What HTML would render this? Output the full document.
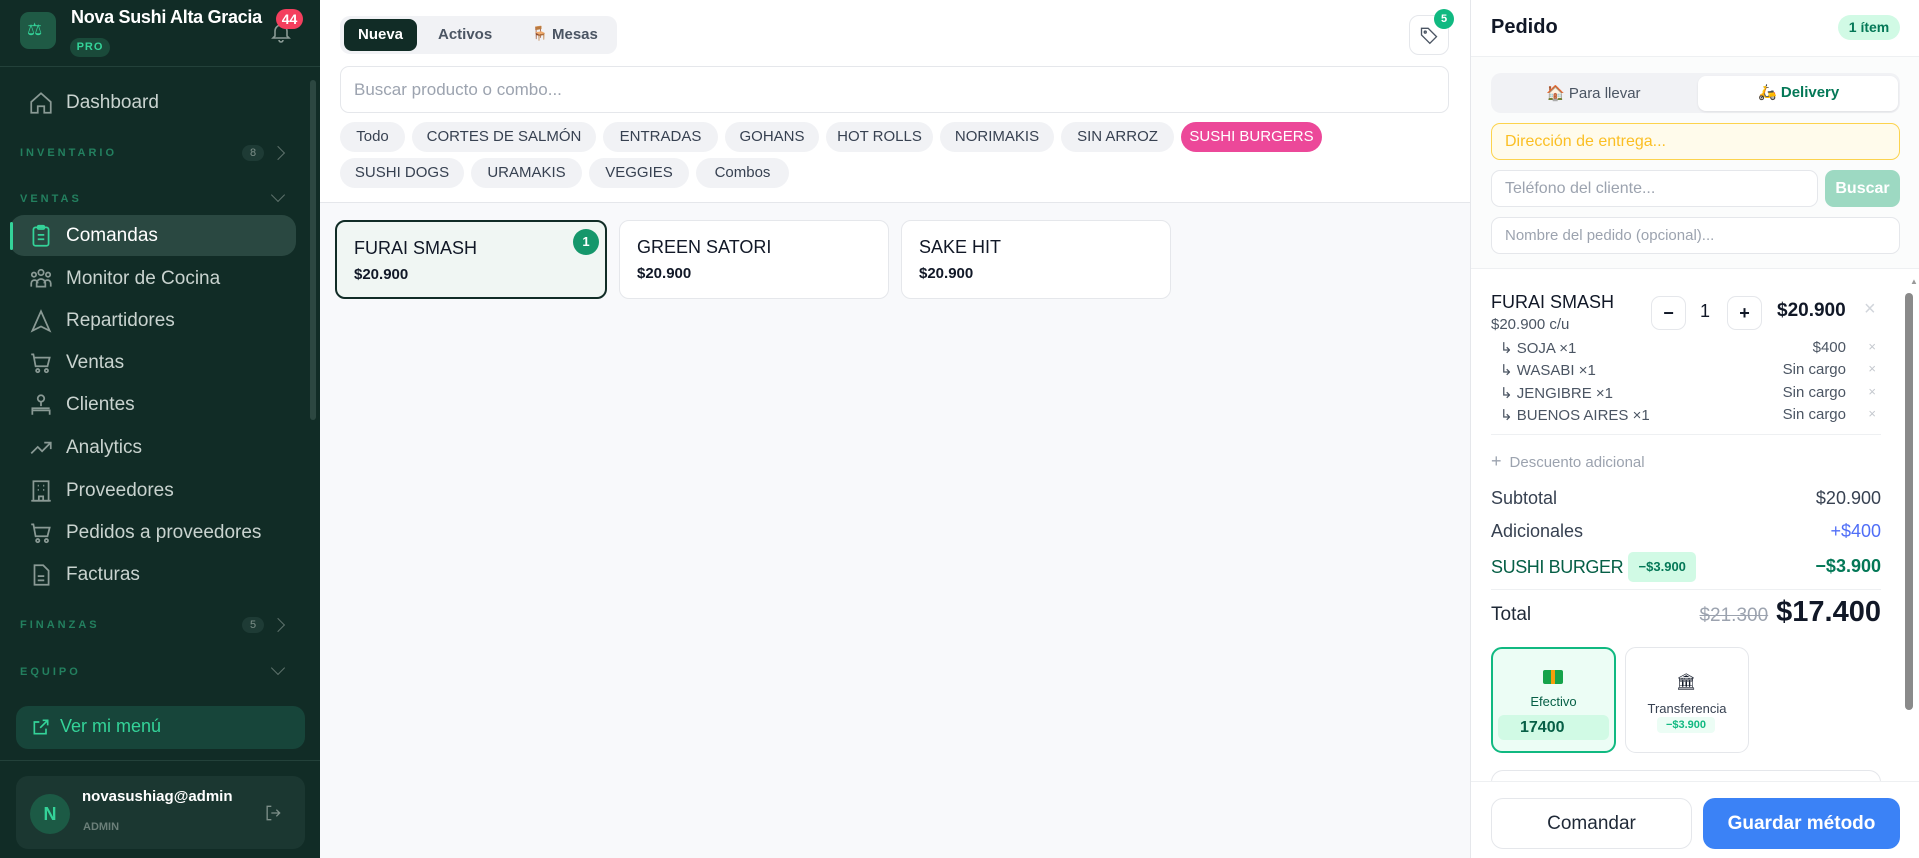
<!DOCTYPE html>
<html><head><meta charset="utf-8"><style>
*{box-sizing:border-box;margin:0;padding:0}
body{width:1919px;height:858px;overflow:hidden;font-family:"Liberation Sans",sans-serif;background:#fff;position:relative;color:#111827}
.a{position:absolute}
#sb{left:0;top:0;width:320px;height:858px;background:#112c26}
.nav{position:absolute;left:28px;font-size:19px;color:#c9d3cf;display:flex;align-items:center;gap:0}
.nav svg{width:26px;height:26px;margin-right:12px;stroke:#8a9a95;fill:none;stroke-width:1.6}
.sec{position:absolute;left:20px;font-size:11px;letter-spacing:3px;font-weight:bold;color:#23805f}
.cnt{position:absolute;left:242px;width:22px;height:16px;border-radius:8px;background:#1e3b35;color:#7d8f89;font-size:11px;text-align:center;line-height:16px}
.chev{position:absolute;left:273px;width:10px;height:10px;border-right:1.6px solid #5d716b;border-bottom:1.6px solid #5d716b}
.chip{position:absolute;height:30px;border-radius:15px;background:#f1f2f5;color:#374151;font-size:15px;line-height:30px;text-align:center}
.card{position:absolute;top:220px;height:79px;background:#fff;border:1px solid #e5e7eb;border-radius:10px}
.card b{position:absolute;left:17px;top:16px;font-size:18px;font-weight:normal;color:#111827}
.card i{position:absolute;left:17px;top:44px;font-size:15px;font-weight:bold;font-style:normal;color:#111827}
.inp{position:absolute;border:1px solid #e5e7eb;border-radius:9px;background:#fff;font-size:16px;color:#9ca3af;padding-left:13px}
.mod{position:absolute;left:1500px;width:380px;font-size:15px;color:#4b5563}
.mod span{position:absolute;right:34px;top:0}
.mod em{position:absolute;right:4px;top:0;font-style:normal;color:#c4c8ce;font-size:13px}
.row{position:absolute;left:1491px;width:390px;font-size:18px;color:#374151}
.row span.r{position:absolute;right:0;top:0}
</style></head><body>
<div id="sb" class="a">
 <div class="a" style="left:20px;top:12px;width:36px;height:37px;border-radius:9px;background:#1f5a45"></div>
 <div class="a" style="left:27px;top:20px;color:#34d399;font-size:17px">⚖</div>
 <div class="a" style="left:71px;top:7px;color:#fff;font-size:18px;font-weight:bold;letter-spacing:-0.3px">Nova Sushi Alta Gracia</div>
 <div class="a" style="left:70px;top:38px;width:40px;height:19px;border-radius:10px;background:#1a4a3a;color:#34d399;font-size:11px;font-weight:bold;text-align:center;line-height:19px;letter-spacing:1px">PRO</div>
 <svg class="a" style="left:268px;top:20px" width="26" height="24" viewBox="0 0 24 24" fill="none" stroke="#8a9a95" stroke-width="1.6"><path d="M6 16V11a6 6 0 0112 0v5l2 2H4z"/><path d="M10 20a2 2 0 004 0"/></svg>
 <div class="a" style="left:276px;top:9px;width:27px;height:20px;border-radius:10px;background:#f43f5e;color:#fff;font-size:14px;font-weight:bold;text-align:center;line-height:20px">44</div>
 <div class="a" style="left:0;top:66px;width:320px;height:1px;background:#23413a"></div>
 <div class="a" style="left:310px;top:80px;width:6px;height:340px;border-radius:3px;background:#2c4741"></div>
 <div class="nav" style="top:90px"><svg viewBox="0 0 24 24"><path d="M3 11l9-8 9 8v10h-6v-6h-6v6H3z"/></svg>Dashboard</div>
 <div class="sec" style="top:147px">INVENTARIO</div><div class="cnt" style="top:145px">8</div><div class="chev" style="top:148px;transform:rotate(-45deg)"></div>
 <div class="sec" style="top:193px">VENTAS</div><div class="chev" style="top:190px;transform:rotate(45deg)"></div>
 <div class="a" style="left:10px;top:215px;width:286px;height:41px;border-radius:14px;background:#2a4841"></div>
 <div class="a" style="left:10px;top:222px;width:3px;height:28px;background:#34d399;border-radius:2px"></div>
 <div class="nav" style="top:223px;color:#fff"><svg viewBox="0 0 24 24" style="stroke:#34d399"><rect x="5" y="4" width="14" height="17" rx="2"/><rect x="9" y="2.5" width="6" height="3" rx="1"/><path d="M9 11h6M9 15h6"/></svg>Comandas</div>
 <div class="nav" style="top:266px"><svg viewBox="0 0 24 24"><circle cx="12" cy="6" r="2.5"/><circle cx="5.5" cy="8" r="2"/><circle cx="18.5" cy="8" r="2"/><path d="M3 19v-3a3 3 0 016 0M15 16a3 3 0 016 0v3M8 19v-3a4 4 0 018 0v3z"/></svg>Monitor de Cocina</div>
 <div class="nav" style="top:308px"><svg viewBox="0 0 24 24"><path d="M12 3L4 21l8-4 8 4z"/></svg>Repartidores</div>
 <div class="nav" style="top:350px"><svg viewBox="0 0 24 24"><path d="M3 4h2l2 11h11l2-8H6"/><circle cx="9" cy="19" r="1.5"/><circle cx="17" cy="19" r="1.5"/></svg>Ventas</div>
 <div class="nav" style="top:392px"><svg viewBox="0 0 24 24"><circle cx="12" cy="6" r="3"/><path d="M12 9v4M4 21v-4h16v4M4 17v-2h16"/></svg>Clientes</div>
 <div class="nav" style="top:435px"><svg viewBox="0 0 24 24"><path d="M3 17l6-6 4 4 8-8M15 7h6v6"/></svg>Analytics</div>
 <div class="nav" style="top:478px"><svg viewBox="0 0 24 24"><rect x="5" y="3" width="14" height="18"/><path d="M9 7h1M14 7h1M9 11h1M14 11h1M10 21v-4h4v4M3 21h18"/></svg>Proveedores</div>
 <div class="nav" style="top:520px"><svg viewBox="0 0 24 24"><path d="M3 4h2l2 11h11l2-8H6"/><circle cx="9" cy="19" r="1.5"/><circle cx="17" cy="19" r="1.5"/></svg>Pedidos a proveedores</div>
 <div class="nav" style="top:562px"><svg viewBox="0 0 24 24"><path d="M6 3h8l5 5v13H6z"/><path d="M9 13h6M9 17h6"/></svg>Facturas</div>
 <div class="sec" style="top:619px">FINANZAS</div><div class="cnt" style="top:617px">5</div><div class="chev" style="top:620px;transform:rotate(-45deg)"></div>
 <div class="sec" style="top:666px">EQUIPO</div><div class="chev" style="top:663px;transform:rotate(45deg)"></div>
 <div class="a" style="left:16px;top:706px;width:289px;height:43px;border-radius:12px;background:#17453a"></div>
 <svg class="a" style="left:31px;top:717px" width="20" height="20" viewBox="0 0 24 24" fill="none" stroke="#34d399" stroke-width="2"><path d="M14 4h6v6M20 4l-9 9M18 14v6H4V6h6"/></svg>
 <div class="a" style="left:60px;top:716px;color:#34d399;font-size:18px">Ver mi menú</div>
 <div class="a" style="left:0;top:760px;width:320px;height:1px;background:#23413a"></div>
 <div class="a" style="left:16px;top:776px;width:289px;height:73px;border-radius:12px;background:#1b3731"></div>
 <div class="a" style="left:30px;top:794px;width:40px;height:40px;border-radius:20px;background:#1c5a45;color:#34d399;font-weight:bold;font-size:18px;text-align:center;line-height:40px">N</div>
 <div class="a" style="left:82px;top:788px;color:#fff;font-size:15px;font-weight:bold">novasushiag@admin</div>
 <div class="a" style="left:83px;top:821px;color:#6b7f79;font-size:11px;font-weight:bold">ADMIN</div>
 <svg class="a" style="left:263px;top:803px" width="20" height="20" viewBox="0 0 24 24" fill="none" stroke="#7d8f89" stroke-width="1.6"><path d="M10 4H5v16h5M10 12h10M16 8l4 4-4 4"/></svg>
</div>

<!-- main -->
<div class="a" style="left:320px;top:0;width:1150px;height:858px;background:#f8f9fb"></div>
<div class="a" style="left:320px;top:0;width:1150px;height:203px;background:#fff;border-bottom:1px solid #e5e7eb"></div>
<div class="a" style="left:340px;top:16px;width:277px;height:38px;border-radius:10px;background:#f1f2f5"></div>
<div class="a" style="left:344px;top:19px;width:73px;height:32px;border-radius:8px;background:#112c26;color:#fff;font-size:15px;font-weight:bold;text-align:center;line-height:32px">Nueva</div>
<div class="a" style="left:438px;top:26px;color:#4b5563;font-size:15px;font-weight:bold">Activos</div>
<div class="a" style="left:531px;top:25px;color:#c0394b;font-size:14px">🪑</div>
<div class="a" style="left:552px;top:26px;color:#4b5563;font-size:15px;font-weight:bold">Mesas</div>
<div class="a" style="left:1409px;top:15px;width:40px;height:40px;border-radius:10px;border:1px solid #e5e7eb;background:#fff"></div>
<svg class="a" style="left:1419px;top:25px" width="20" height="20" viewBox="0 0 24 24" fill="none" stroke="#4b5563" stroke-width="1.6"><path d="M3 12V4h8l10 10-8 8z"/><circle cx="7.5" cy="8.5" r="1.2"/></svg>
<div class="a" style="left:1434px;top:9px;width:20px;height:20px;border-radius:10px;background:#10b981;color:#fff;font-size:11px;font-weight:bold;text-align:center;line-height:20px">5</div>
<div class="inp" style="left:340px;top:66px;width:1109px;height:47px;line-height:45px;font-size:17px">Buscar producto o combo...</div>
<div class="chip" style="left:340px;top:122px;width:65px">Todo</div>
<div class="chip" style="left:412px;top:122px;width:184px">CORTES DE SALMÓN</div>
<div class="chip" style="left:603px;top:122px;width:115px">ENTRADAS</div>
<div class="chip" style="left:725px;top:122px;width:94px">GOHANS</div>
<div class="chip" style="left:826px;top:122px;width:107px">HOT ROLLS</div>
<div class="chip" style="left:940px;top:122px;width:114px">NORIMAKIS</div>
<div class="chip" style="left:1061px;top:122px;width:113px">SIN ARROZ</div>
<div class="chip" style="left:1181px;top:122px;width:141px;background:#ec4899;color:#fff">SUSHI BURGERS</div>
<div class="chip" style="left:340px;top:158px;width:124px">SUSHI DOGS</div>
<div class="chip" style="left:471px;top:158px;width:111px">URAMAKIS</div>
<div class="chip" style="left:589px;top:158px;width:100px">VEGGIES</div>
<div class="chip" style="left:696px;top:158px;width:93px">Combos</div>
<div class="card" style="left:335px;width:272px;border:2px solid #112c26;background:#f0f6f3"><b>FURAI SMASH</b><i>$20.900</i></div>
<div class="a" style="left:573px;top:229px;width:26px;height:26px;border-radius:13px;background:#15976b;color:#fff;font-size:13px;font-weight:bold;text-align:center;line-height:26px">1</div>
<div class="card" style="left:619px;width:270px"><b>GREEN SATORI</b><i>$20.900</i></div>
<div class="card" style="left:901px;width:270px"><b>SAKE HIT</b><i>$20.900</i></div>

<!-- right panel -->
<div class="a" style="left:1470px;top:0;width:449px;height:858px;background:#fff;border-left:1px solid #e5e7eb"></div>
<div class="a" style="left:1491px;top:16px;font-size:20px;font-weight:bold;color:#111827">Pedido</div>
<div class="a" style="left:1838px;top:15px;width:62px;height:25px;border-radius:13px;background:#d1fae5;color:#047857;font-size:14px;font-weight:bold;text-align:center;line-height:25px">1 ítem</div>
<div class="a" style="left:1471px;top:56px;width:448px;height:213px;background:#fbfcfc;border-top:1px solid #eef0f2;border-bottom:1px solid #eef0f2"></div>
<div class="a" style="left:1491px;top:73px;width:409px;height:40px;border-radius:10px;background:#f1f2f5"></div>
<div class="a" style="left:1698px;top:76px;width:200px;height:35px;border-radius:8px;background:#fff;box-shadow:0 1px 2px rgba(0,0,0,.08)"></div>
<div class="a" style="left:1546px;top:84px;font-size:15px;color:#4b5563">🏠 Para llevar</div>
<div class="a" style="left:1758px;top:83px;font-size:15px;color:#047857;font-weight:bold"><span style="color:#e11d48">🛵</span> Delivery</div>
<div class="inp" style="left:1491px;top:123px;width:409px;height:37px;line-height:35px;background:#fffbeb;border-color:#fcd34d;color:#fbbf24;font-size:16px">Dirección de entrega...</div>
<div class="inp" style="left:1491px;top:170px;width:327px;height:37px;line-height:35px">Teléfono del cliente...</div>
<div class="a" style="left:1825px;top:170px;width:75px;height:37px;border-radius:9px;background:#9dd9c2;color:#fff;font-size:16px;font-weight:bold;text-align:center;line-height:37px">Buscar</div>
<div class="inp" style="left:1491px;top:217px;width:409px;height:37px;line-height:35px;font-size:15px">Nombre del pedido (opcional)...</div>
<div class="a" style="left:1491px;top:292px;font-size:18px;color:#111827">FURAI SMASH</div>
<div class="a" style="left:1491px;top:316px;font-size:15px;color:#4b5563">$20.900 c/u</div>
<div class="a" style="left:1651px;top:296px;width:35px;height:34px;border:1px solid #e5e7eb;border-radius:9px;text-align:center;line-height:32px;font-size:18px;font-weight:bold">−</div>
<div class="a" style="left:1700px;top:301px;font-size:18px">1</div>
<div class="a" style="left:1727px;top:296px;width:35px;height:34px;border:1px solid #e5e7eb;border-radius:9px;text-align:center;line-height:32px;font-size:18px;font-weight:bold">+</div>
<div class="a" style="left:1777px;top:300px;font-size:19px;font-weight:bold">$20.900</div>
<div class="a" style="left:1864px;top:298px;font-size:20px;color:#d1d5db">×</div>
<div class="mod" style="top:339px">↳ SOJA ×1<span>$400</span><em>×</em></div>
<div class="mod" style="top:361px">↳ WASABI ×1<span>Sin cargo</span><em>×</em></div>
<div class="mod" style="top:384px">↳ JENGIBRE ×1<span>Sin cargo</span><em>×</em></div>
<div class="mod" style="top:406px">↳ BUENOS AIRES ×1<span>Sin cargo</span><em>×</em></div>
<div class="a" style="left:1491px;top:434px;width:390px;height:1px;background:#eef0f2"></div>
<div class="a" style="left:1491px;top:451px;font-size:15px;color:#9ca3af"><span style="font-size:18px;margin-right:8px">+</span>Descuento adicional</div>
<div class="row" style="top:488px">Subtotal<span class="r">$20.900</span></div>
<div class="row" style="top:521px">Adicionales<span class="r" style="color:#4f6ef7">+$400</span></div>
<div class="row" style="top:552px;color:#065f46;display:flex;align-items:center"><span style="letter-spacing:-0.4px">SUSHI BURGER</span><span style="display:inline-block;margin-left:5px;width:68px;height:30px;border-radius:5px;background:#d1fae5;color:#047857;font-size:13px;font-weight:bold;text-align:center;line-height:30px">−$3.900</span><span class="r" style="font-weight:bold;color:#047857;top:4px">−$3.900</span></div>
<div class="a" style="left:1491px;top:589px;width:390px;height:1px;background:#eef0f2"></div>
<div class="row" style="top:604px;font-size:19px;color:#1f2937">Total</div>
<div class="a" style="right:38px;top:596px;white-space:nowrap"><span style="font-size:19px;color:#9ca3af;text-decoration:line-through;margin-right:8px">$21.300</span><span style="font-size:29px;font-weight:bold;color:#111827">$17.400</span></div>
<div class="a" style="left:1491px;top:647px;width:125px;height:106px;border:2px solid #10b981;border-radius:11px;background:#ecfdf5"></div>
<div class="a" style="left:1543px;top:670px;width:20px;height:14px;background:#16a34a;border-radius:2px"><div style="margin:0 auto;width:4px;height:14px;background:#f59e0b"></div></div>
<div class="a" style="left:1491px;top:694px;width:125px;text-align:center;font-size:13px;color:#065f46">Efectivo</div>
<div class="a" style="left:1498px;top:715px;width:111px;height:25px;border-radius:6px;background:#d1fae5;color:#065f46;font-size:16px;font-weight:bold;line-height:25px;padding-left:22px">17400</div>
<div class="a" style="left:1625px;top:647px;width:124px;height:106px;border:1px solid #e5e7eb;border-radius:11px;background:#fff"></div>
<div class="a" style="left:1676px;top:672px;font-size:16px">🏛</div>
<div class="a" style="left:1625px;top:701px;width:124px;text-align:center;font-size:13px;color:#374151">Transferencia</div>
<div class="a" style="left:1657px;top:717px;width:58px;height:16px;border-radius:4px;background:#ecfdf5;color:#10b981;font-size:11px;font-weight:bold;text-align:center;line-height:16px">−$3.900</div>
<div class="a" style="left:1491px;top:770px;width:390px;height:20px;border:1px solid #e5e7eb;border-radius:12px 12px 0 0;border-bottom:none"></div>
<div class="a" style="left:1910px;top:277px;width:8px;height:10px;color:#999;font-size:8px">▲</div>
<div class="a" style="left:1905px;top:293px;width:8px;height:417px;border-radius:4px;background:#8a8a8a"></div>
<div class="a" style="left:1471px;top:781px;width:448px;height:77px;background:#fff;border-top:1px solid #eef0f2"></div>
<div class="a" style="left:1491px;top:798px;width:201px;height:51px;border:1px solid #e5e7eb;border-radius:12px;text-align:center;line-height:49px;font-size:19px;color:#1f2937">Comandar</div>
<div class="a" style="left:1703px;top:798px;width:197px;height:51px;border-radius:12px;background:#3b82f6;text-align:center;line-height:51px;font-size:19px;font-weight:bold;color:#fff">Guardar método</div>
</body></html>
